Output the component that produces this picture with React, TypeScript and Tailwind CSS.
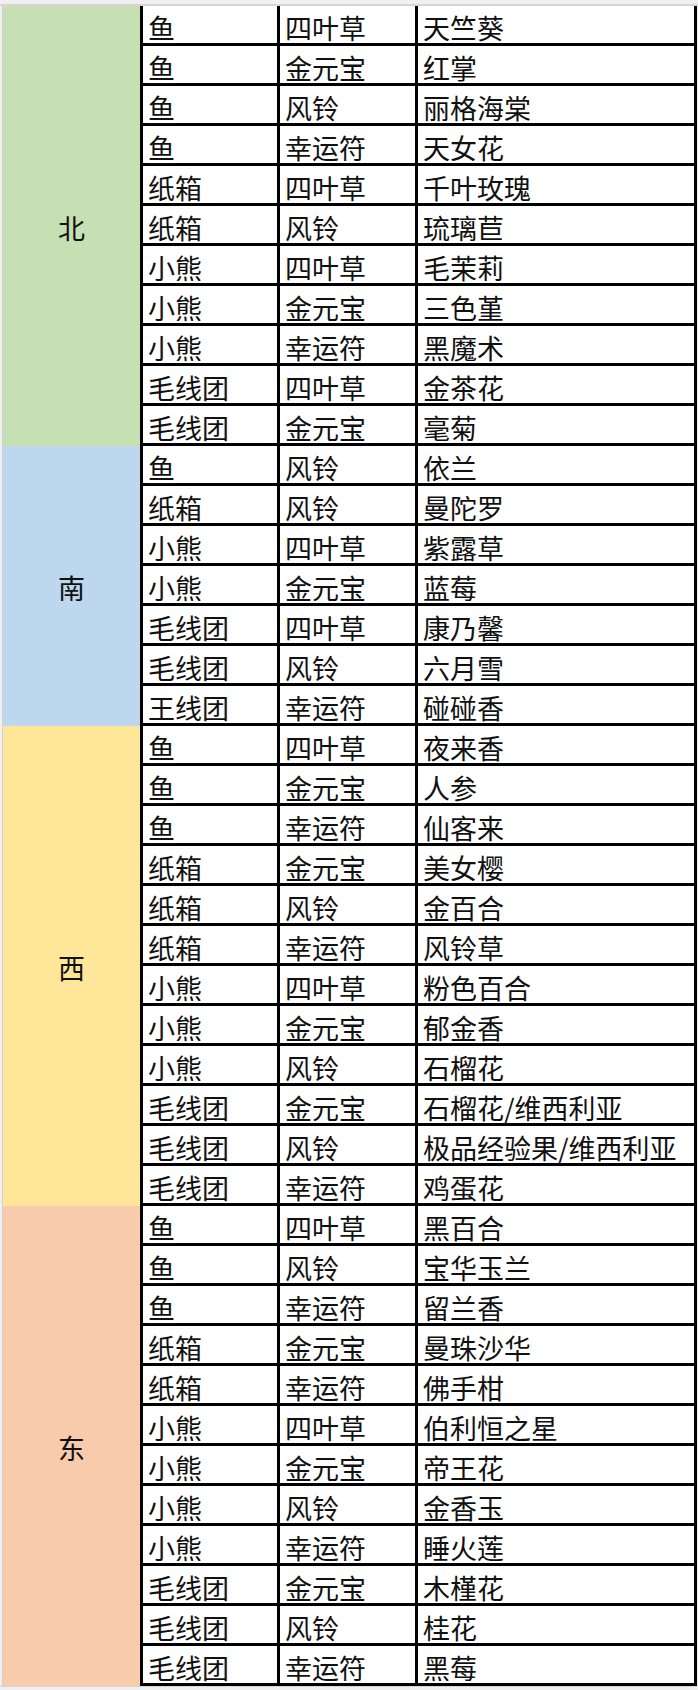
type Row = [string, string, string]

type Region = { name: string; bg: string; rows: Row[] }

const REGIONS: Region[] = [
  {
    name: '北',
    bg: 'bg-[#c6e0b4]',
    rows: [
      ['鱼', '四叶草', '天竺葵'],
      ['鱼', '金元宝', '红掌'],
      ['鱼', '风铃', '丽格海棠'],
      ['鱼', '幸运符', '天女花'],
      ['纸箱', '四叶草', '千叶玫瑰'],
      ['纸箱', '风铃', '琉璃苣'],
      ['小熊', '四叶草', '毛茉莉'],
      ['小熊', '金元宝', '三色堇'],
      ['小熊', '幸运符', '黑魔术'],
      ['毛线团', '四叶草', '金茶花'],
      ['毛线团', '金元宝', '毫菊'],
    ],
  },
  {
    name: '南',
    bg: 'bg-[#bdd7ee]',
    rows: [
      ['鱼', '风铃', '依兰'],
      ['纸箱', '风铃', '曼陀罗'],
      ['小熊', '四叶草', '紫露草'],
      ['小熊', '金元宝', '蓝莓'],
      ['毛线团', '四叶草', '康乃馨'],
      ['毛线团', '风铃', '六月雪'],
      ['王线团', '幸运符', '碰碰香'],
    ],
  },
  {
    name: '西',
    bg: 'bg-[#ffe699]',
    rows: [
      ['鱼', '四叶草', '夜来香'],
      ['鱼', '金元宝', '人参'],
      ['鱼', '幸运符', '仙客来'],
      ['纸箱', '金元宝', '美女樱'],
      ['纸箱', '风铃', '金百合'],
      ['纸箱', '幸运符', '风铃草'],
      ['小熊', '四叶草', '粉色百合'],
      ['小熊', '金元宝', '郁金香'],
      ['小熊', '风铃', '石榴花'],
      ['毛线团', '金元宝', '石榴花/维西利亚'],
      ['毛线团', '风铃', '极品经验果/维西利亚'],
      ['毛线团', '幸运符', '鸡蛋花'],
    ],
  },
  {
    name: '东',
    bg: 'bg-[#f8cbad]',
    rows: [
      ['鱼', '四叶草', '黑百合'],
      ['鱼', '风铃', '宝华玉兰'],
      ['鱼', '幸运符', '留兰香'],
      ['纸箱', '金元宝', '曼珠沙华'],
      ['纸箱', '幸运符', '佛手柑'],
      ['小熊', '四叶草', '伯利恒之星'],
      ['小熊', '金元宝', '帝王花'],
      ['小熊', '风铃', '金香玉'],
      ['小熊', '幸运符', '睡火莲'],
      ['毛线团', '金元宝', '木槿花'],
      ['毛线团', '风铃', '桂花'],
      ['毛线团', '幸运符', '黑莓'],
    ],
  },
]

const cell = 'flex items-end border-l-[3px] border-black pl-[5px] leading-[30px] whitespace-nowrap'

function TableRow({ row }: { row: Row }) {
  const [pet, item, flower] = row
  return (
    <div className="flex h-[40px] border-b-[3px] border-black bg-white">
      <div className={`${cell} w-[137px]`}>
        <span className={pet === '鱼' ? 'underline decoration-1 underline-offset-[4px]' : ''}>{pet}</span>
      </div>
      <div className={`${cell} w-[138px]`}>{item}</div>
      <div className={`${cell} w-[282px] border-r-[3px]`}>{flower}</div>
    </div>
  )
}

export default function App() {
  return (
    <div
      className="w-[698px] h-[1690px] bg-[#f0f0f0] text-[27px] text-[#111] overflow-hidden"
      style={{ fontFamily: '"Noto Sans CJK SC", "Noto Sans", sans-serif' }}
    >
      <div className="h-[6px] border-b-2 border-[#d6d6d6]" />
      <div className="flex">
        <div className="w-[3px] border-r border-[#d0d0d0]" />
        <div className="flex flex-col">
          {REGIONS.map(region => (
            <div key={region.name} className="flex">
              <div className={`w-[137px] flex items-center justify-center pt-[4px] ${region.bg}`}>
                {region.name}
              </div>
              <div className="flex flex-col">
                {region.rows.map((row, i) => <TableRow key={i} row={row} />)}
              </div>
            </div>
          ))}
        </div>
      </div>
      <div className="h-[4px] border-t border-[#d6d6d6]" />
    </div>
  )
}
